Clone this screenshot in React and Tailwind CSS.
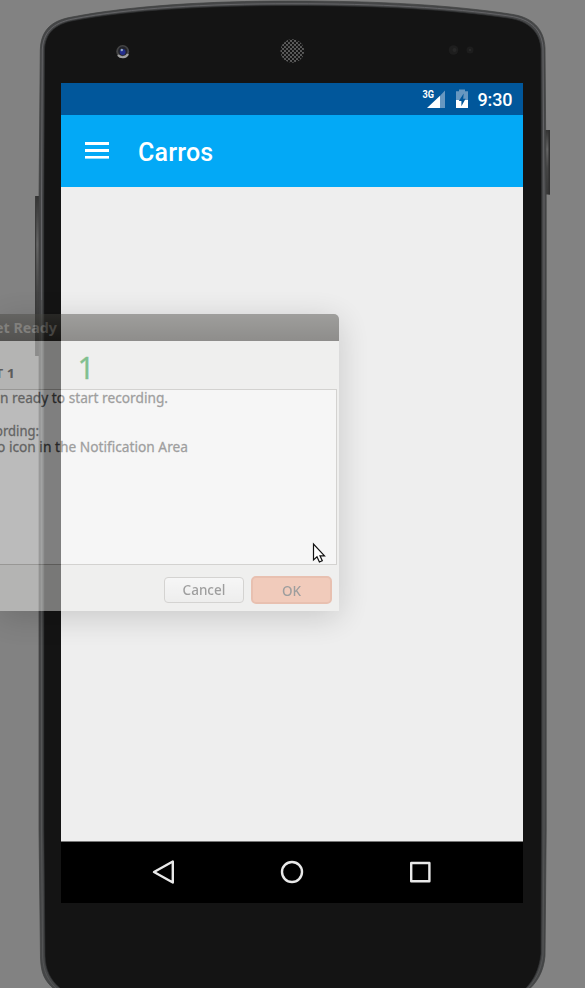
import React from "react";

function Device() {
  const outer =
    "M39 200 L40.3 50 C41 32 49 21 72 17 C130 6 205 1 292 1 C380 1 450 5 510 14 C533 17 544 29 545 48 L546.2 200 V830 L545 956 C543.5 973 536 984 526 992 L518 1000 H61 L54 989 C45 981 41 974 40.5 958 L39 830 Z";
  const inner =
    "M43.8 200 L44.5 50 C45 34 54 24 74 20.5 C130 10 205 5.5 292 5.5 C380 5.5 450 9.5 508 18 C530 21 540 33 541 49 L541.5 200 V830 L541 954 C539 970 534 980 525 989 L515 997 H68 L61 989 C50 980 45.5 970 45 956 L43.8 830 Z";
  return (
    <svg className="absolute inset-0" width="585" height="988" viewBox="0 0 585 988">
      <defs>
        <linearGradient id="key" x1="0" y1="0" x2="0" y2="1">
          <stop offset="0" stopColor="#333" />
          <stop offset=".3" stopColor="#656565" />
          <stop offset=".6" stopColor="#444" />
          <stop offset="1" stopColor="#383838" />
        </linearGradient>
        <pattern id="mesh" width="4" height="4" patternUnits="userSpaceOnUse">
          <rect width="4" height="4" fill="#5c5c5c" />
          <circle cx="1" cy="1" r="1.15" fill="#111" />
          <circle cx="3" cy="3" r="1.15" fill="#111" />
        </pattern>
      </defs>
      <rect x="35" y="196" width="5" height="160" fill="url(#key)" />
      <rect x="35" y="196" width="1.2" height="160" fill="#3b3b3b" />
      <rect x="545" y="130" width="5" height="64.5" fill="url(#key)" />
      <rect x="548.5" y="130" width="1.5" height="64.5" fill="#303030" />
      <path d={outer} fill="#454647" stroke="#3f4041" strokeWidth=".7" />
      <path d={inner} fill="#141414" stroke="#2e2f30" strokeWidth=".7" />
      <path
        d="M41.5 300 V200 L42.3 50 C43 33 52 23 73 19 C130 8 205 3.7 292 3.7 C380 3.7 450 7.5 509 16 C532 19 542 31 543 48 L544 200 V300"
        fill="none"
        stroke="#66676a"
        strokeWidth=".9"
      />
      <path
        d="M41.5 300 V830 L42.6 957 C43.5 972 48 981 58 990 M544 300 V830 L543 955 C541 971 535 982 525 991"
        fill="none"
        stroke="#565758"
        strokeWidth=".9"
      />
      <circle cx="122.7" cy="51.5" r="6.5" fill="#444" />
      <path d="M118 55 A6 6 0 0 0 128 54" fill="none" stroke="#a0a0a0" strokeWidth="2.2" />
      <circle cx="122.7" cy="51" r="4.6" fill="#23242c" />
      <circle cx="122.7" cy="52" r="2.9" fill="#242e8c" />
      <circle cx="121.8" cy="50" r="1.2" fill="#8fa6c4" />
      <circle cx="292.3" cy="51" r="11.8" fill="url(#mesh)" />
      <circle cx="453.5" cy="50" r="4.8" fill="#1e1e1e" />
      <circle cx="454.5" cy="50" r="2" fill="#272727" />
      <circle cx="470" cy="50" r="3.5" fill="#1d1d1d" />
      <circle cx="470" cy="50" r="1.2" fill="#292929" />
    </svg>
  );
}

function StatusBar() {
  return (
    <div className="flex h-8 items-center justify-end bg-[#01579b] pr-[10.5px] text-white">
      <svg className="mr-[7px]" width="48" height="20" viewBox="0 0 48 20">
        <text x="0.6" y="9" fill="#fff" fontFamily="Roboto, sans-serif" fontWeight="700" fontSize="10.5" textLength="11.5" lengthAdjust="spacingAndGlyphs">3G</text>
        <path d="M23 1.5 V19 H18 V6.7 Z" fill="#6797c0" />
        <path d="M5 19 L18 6.7 V19 Z" fill="#fff" />
        <path d="M37 .5 h6 v1.8 h3 v9 h-12 v-9 h3 Z" fill="#6797c0" />
        <path d="M34 11 h12 v8 h-12 Z" fill="#fff" />
        <path d="M41.7 4.5 L36.8 12 H39.4 V17.2 L43.6 9.7 H41.2 Z" fill="#01579b" />
      </svg>
      <span className="text-[18px] font-medium leading-8 tracking-[-0.1px] translate-y-px">9:30</span>
    </div>
  );
}

function AppBar() {
  return (
    <div className="flex h-[72px] items-center bg-[#03a9f6] pl-6 text-white">
      <svg className="mb-[1px]" width="24" height="17" viewBox="0 0 24 17" fill="#fff">
        <rect width="24" height="3" />
        <rect y="7" width="24" height="3" />
        <rect y="14" width="24" height="2.6" />
      </svg>
      <h1 className="ml-[29px] mt-[3px] text-[25px] font-medium tracking-[0.2px]">Carros</h1>
    </div>
  );
}

function NavBar() {
  return (
    <div className="flex h-[62px] items-center justify-between border-t border-[#777] bg-black px-[90px] pb-[2px]">
      <svg width="26" height="26" viewBox="0 0 26 26" fill="none" stroke="#e9e9e9" strokeWidth="2.4" strokeLinejoin="round">
        <path d="M3 13 L21.8 2.5 V23.5 Z" />
      </svg>
      <svg width="26" height="26" viewBox="0 0 26 26" fill="none" stroke="#e9e9e9" strokeWidth="2.4">
        <circle cx="13" cy="13" r="10" />
      </svg>
      <svg width="26" height="26" viewBox="0 0 26 26" fill="none" stroke="#e9e9e9" strokeWidth="2.4" strokeLinejoin="round">
        <rect x="4.2" y="4" width="18.2" height="18.2" />
      </svg>
    </div>
  );
}

function ReadyDialog() {
  return (
    <div className="absolute left-0 top-[314px] h-[297px] w-[339px] rounded-tr-[5px] opacity-[.46] shadow-[0_6px_32px_rgba(0,0,0,.36)]">
      <div className="flex h-full flex-col overflow-hidden rounded-tr-[5px] bg-[#f0efee] font-['Noto_Sans',sans-serif] text-[#404040]">
        <div className="h-[27px] shrink-0 bg-linear-to-b from-[#42413c] to-[#1d1b17]">
          <svg width="70" height="27">
            <text x="-5" y="19" fill="#817e78" fontSize="14" fontWeight="700" textLength="62" lengthAdjust="spacingAndGlyphs">et Ready</text>
          </svg>
        </div>
        <svg className="shrink-0" width="339" height="48">
          <text x="-5" y="37" fill="#303030" fontSize="13" fontWeight="700" textLength="20" lengthAdjust="spacingAndGlyphs">T 1</text>
          <text x="77.5" y="37.5" fill="#008a1c" stroke="#008a1c" strokeWidth=".3" fontSize="30">1</text>
        </svg>
        <div className="mr-[2px] h-[176px] shrink-0 border-y border-r border-[#b4b1ad] bg-white">
          <svg width="220" height="80">
            <g fill="#404040" fontSize="14" stroke="#404040" strokeWidth=".3">
              <text x="0" y="13.4" textLength="168" lengthAdjust="spacingAndGlyphs">n ready to start recording.</text>
              <text x="-5" y="46" textLength="44" lengthAdjust="spacingAndGlyphs">ording:</text>
              <text x="-3" y="62.4" textLength="191" lengthAdjust="spacingAndGlyphs">o icon in the Notification Area</text>
            </g>
          </svg>
        </div>
        <div className="flex flex-1 items-start justify-end gap-[7px] pr-[7px] pt-[11px] text-[13.5px] font-medium">
          <button className="mt-px h-[26px] w-[80px] rounded-[4px] border border-[#b5b2ae] bg-linear-to-b from-white to-[#ececeb]">Cancel</button>
          <button className="h-[28px] w-[81px] rounded-[5px] border-2 border-[#e08a68] bg-[#f5a27f] pt-[2px] leading-5">OK</button>
        </div>
      </div>
    </div>
  );
}

export default function App() {
  return (
    <div className="relative h-[988px] w-[585px] overflow-hidden bg-[#828282] font-[Roboto,sans-serif]">
      <Device />
      <main className="relative ml-[61px] flex h-[903px] w-[462px] flex-col pt-[83px]">
        <StatusBar />
        <AppBar />
        <div className="flex-1 bg-[#eeeeee]" />
        <NavBar />
      </main>
      <ReadyDialog />
      <svg className="absolute left-[312px] top-[542px]" width="15" height="23" viewBox="0 0 15 23">
        <path d="M1.5 2 V18 L5 14.8 L7.4 20 L10.3 18.7 L8 13.8 H12.5 Z" fill="#fff" stroke="#111" strokeWidth="1.2" />
      </svg>
    </div>
  );
}
